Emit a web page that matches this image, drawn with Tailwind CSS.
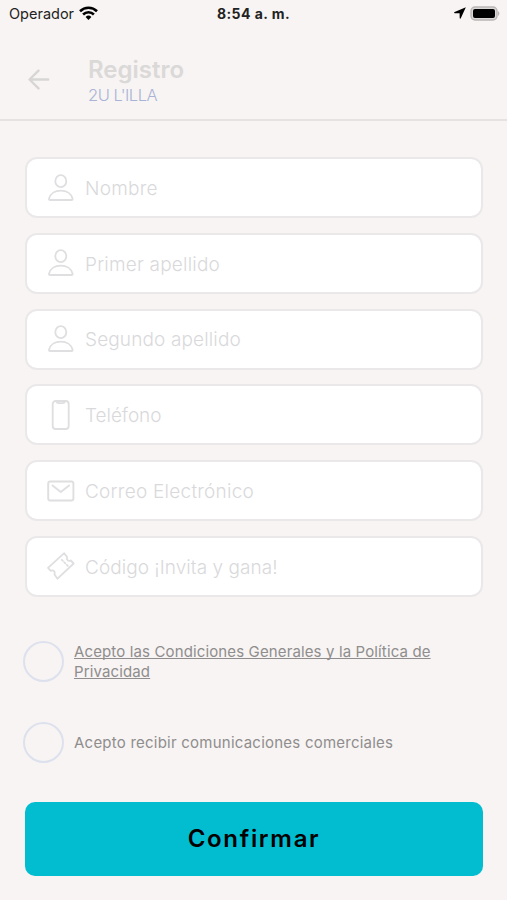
<!DOCTYPE html>
<html lang="es">
<head>
    <meta charset="UTF-8">
    <meta name="viewport" content="width=device-width, initial-scale=1.0">
    <title>Registro - 2U L'ILLA</title>
    <script src="https://cdn.jsdelivr.net/npm/@tailwindcss/browser@4"></script>
</head>
<body class="h-[900px] overflow-hidden bg-[#f7f4f3] font-['Inter',sans-serif]">
    <!-- Status bar -->
    <div class="grid h-7 grid-cols-3 items-center pl-[9px] pr-[7px] text-black">
        <div class="flex items-center gap-[5px]">
            <span class="text-[14.5px] text-[#222]">Operador</span>
            <svg class="-mt-[2px] h-[14px] w-[19px]" viewBox="0 0 19 14" fill="none" stroke="currentColor" stroke-width="2.6">
                <path d="M1 5.2a12.2 12.2 0 0 1 17 0" />
                <path d="M4.1 8.5a7.7 7.7 0 0 1 10.8 0" />
                <path d="M9.5 14 6.6 11a4.2 4.2 0 0 1 5.8 0z" fill="currentColor" stroke="none" />
            </svg>
        </div>
        <span class="-ml-[2px] -mt-[1px] text-center text-[14px] font-bold tracking-[0.45px] text-[#222]">8:54 a. m.</span>
        <div class="-mt-[2px] flex items-center justify-end gap-[4px]">
            <svg class="h-3 w-3" viewBox="0 0 12 12" fill="currentColor">
                <path d="M11.3.4.6 5.1c-.7.3-.6 1.1.2 1.1l4.8.1.1 4.8c0 .8.8.9 1.1.2L11.6.8c.1-.3 0-.5-.3-.4z" />
            </svg>
            <svg class="h-[15px] w-[30px]" viewBox="0 0 30 15">
                <rect x="1" y="1" width="26" height="13" rx="4" fill="#dad7d6" stroke="#b9b6b5" stroke-width="1.4" />
                <rect x="3" y="3" width="22" height="9" rx="2" fill="#000" />
                <path d="M28 5.2c1.8.6 1.8 4 0 4.6z" fill="#b9b6b5" />
            </svg>
        </div>
    </div>

    <!-- Header -->
    <header class="flex h-[93px] items-start border-b-2 border-[#e5e2e1] pl-7">
        <svg class="mt-[41px] h-[21px] w-[22px]" viewBox="0 0 22 21" fill="none" stroke="#d8d6d5" stroke-width="2.4" stroke-linecap="round" stroke-linejoin="round">
            <path d="M20.2 10.5H1.8M10.500 1.6l-9 8.9 9 8.900" />
        </svg>
        <div class="ml-[38px] mt-[27px]">
            <h1 class="text-[24px] leading-[29px] font-semibold tracking-[0px] text-[#dbd9d8]">Registro</h1>
            <p class="text-[16.5px] leading-[22px] font-light tracking-[-0.5px] text-[#a9b3d6]">2U L'ILLA</p>
        </div>
    </header>

    <!-- Form -->
    <main class="px-[25px] pt-9">
        <div class="flex flex-col gap-[14.8px] text-[19px] font-light text-[#d9d9db]">
            <label class="flex h-[61px] w-[458px] items-center rounded-[12px] border-2 border-[#ebe8e9] bg-white pl-[19px]">
                <svg class="h-[30px] w-[30px]" viewBox="0 0 30 30" fill="none" stroke="#dfdee0" stroke-width="1.8" stroke-linejoin="round">
                    <ellipse cx="14.8" cy="8.2" rx="5.5" ry="6" />
                    <path d="M4 27h21.6c.8 0 1.2-.5 1-1.3-1.3-5.2-6.2-8.1-11.8-8.1S4.3 20.5 3 25.7c-.2.8.2 1.3 1 1.3z" />
                </svg>
                <span class="ml-[9px] pt-[3px] tracking-[0.25px]">Nombre</span>
            </label>
            <label class="flex h-[61px] w-[458px] items-center rounded-[12px] border-2 border-[#ebe8e9] bg-white pl-[19px]">
                <svg class="h-[30px] w-[30px]" viewBox="0 0 30 30" fill="none" stroke="#dfdee0" stroke-width="1.8" stroke-linejoin="round">
                    <ellipse cx="14.8" cy="8.2" rx="5.5" ry="6" />
                    <path d="M4 27h21.6c.8 0 1.2-.5 1-1.3-1.3-5.2-6.2-8.1-11.8-8.1S4.3 20.5 3 25.7c-.2.8.2 1.3 1 1.3z" />
                </svg>
                <span class="ml-[9px] pt-[3px] tracking-[0.2px]">Primer apellido</span>
            </label>
            <label class="flex h-[61px] w-[458px] items-center rounded-[12px] border-2 border-[#ebe8e9] bg-white pl-[19px]">
                <svg class="h-[30px] w-[30px]" viewBox="0 0 30 30" fill="none" stroke="#dfdee0" stroke-width="1.8" stroke-linejoin="round">
                    <ellipse cx="14.8" cy="8.2" rx="5.5" ry="6" />
                    <path d="M4 27h21.6c.8 0 1.2-.5 1-1.3-1.3-5.2-6.2-8.1-11.8-8.1S4.3 20.5 3 25.7c-.2.8.2 1.3 1 1.3z" />
                </svg>
                <span class="ml-[9px] pt-[3px] tracking-[0.13px]">Segundo apellido</span>
            </label>
            <label class="flex h-[61px] w-[458px] items-center rounded-[12px] border-2 border-[#ebe8e9] bg-white pl-[19px]">
                <svg class="h-[30px] w-[30px]" viewBox="0 0 30 30" fill="none" stroke="#dfdee0" stroke-width="1.8" stroke-linejoin="round">
                    <rect x="6.7" y="1" width="16" height="28" rx="3" />
                    <path d="M10.5 1.500c.3 1.200 1 1.600 2 1.600h4.400c1 0 1.700-.4 2-1.600" />
                </svg>
                <span class="ml-[9px] pt-[3px] tracking-[-0.05px]">Teléfono</span>
            </label>
            <label class="flex h-[61px] w-[458px] items-center rounded-[12px] border-2 border-[#ebe8e9] bg-white pl-[19px]">
                <svg class="h-[30px] w-[30px]" viewBox="0 0 30 30" fill="none" stroke="#dfdee0" stroke-width="1.9" stroke-linecap="round" stroke-linejoin="round">
                    <rect x="2.2" y="5.500" width="25.2" height="19" rx="2" />
                    <path d="M6.5 9.5l8.3 6.5 8.3-6.5" />
                </svg>
                <span class="ml-[9px] pt-[3px] tracking-[0.25px]">Correo Electrónico</span>
            </label>
            <label class="flex h-[61px] w-[458px] items-center rounded-[12px] border-2 border-[#ebe8e9] bg-white pl-[19px]">
                <svg class="h-[30px] w-[30px]" viewBox="0 0 30 30" fill="none" stroke="#dfdee0" stroke-width="1.8" stroke-linecap="round" stroke-linejoin="round">
                    <path d="M18.2 2.2 2 16.9l2.8 2.9c2.6-1.2 4.800 1 3.700 3.600l3 4.300L27.700 12.500l-2.900-3c-2.500 1.300-4.800-.9-3.700-3.500z" />
                    <path d="M15.800 8.800l1.100 1.100M18.300 11.300l1 1M20.800 13.800l1 1" />
                </svg>
                <span class="ml-[9px] pt-[3px] tracking-[0.05px]">Código ¡Invita y gana!</span>
            </label>
        </div>

        <!-- Consents -->
        <div class="-ml-[2px] mt-[44px] flex flex-col gap-[40px] text-[15px] leading-[20px] text-[#8f8d8d]">
            <div class="flex h-[41px] items-center gap-[10px]">
                <span class="h-[41px] w-[41px] shrink-0 rounded-full border-2 border-[#dde1ee]"></span>
                <p class="pt-[2px] whitespace-nowrap tracking-[0.13px] underline underline-offset-1 [text-decoration-skip-ink:none]">Acepto las Condiciones Generales y la Política de<br>Privacidad</p>
            </div>
            <div class="flex h-[41px] items-center gap-[10px]">
                <span class="h-[41px] w-[41px] shrink-0 rounded-full border-2 border-[#dde1ee]"></span>
                <p class="pt-[1px] whitespace-nowrap tracking-[0.23px]">Acepto recibir comunicaciones comerciales</p>
            </div>
        </div>

        <button class="mt-[39px] h-[74px] w-[458px] rounded-[10px] bg-[#02bcd0] text-[24px] font-semibold tracking-[1.7px] text-black">Confirmar</button>
    </main>
</body>
</html>
